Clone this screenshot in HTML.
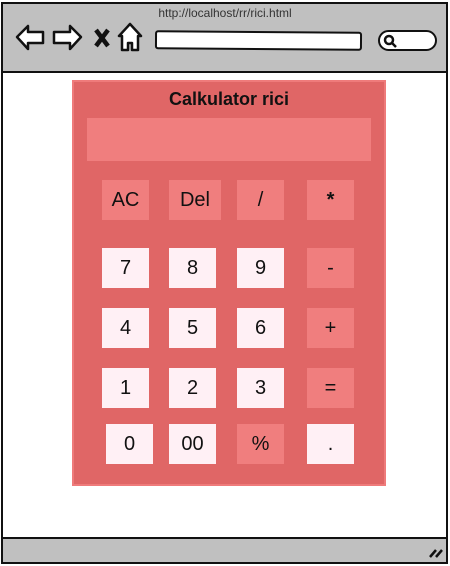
<!DOCTYPE html>
<html><head><meta charset="utf-8"><style>
*{margin:0;padding:0;box-sizing:border-box}
body{width:450px;height:566px;background:#fff;position:relative;overflow:hidden;font-family:"Liberation Sans",sans-serif}
.win{position:absolute;left:1px;top:2px;width:447px;height:562px;border:2px solid #111;border-radius:2px}
.hdr{position:absolute;left:1px;top:2px;width:447px;height:71px;background:#c0c0c0;border:2px solid #111}
.ftr{position:absolute;left:1px;top:537px;width:447px;height:27px;background:#c0c0c0;border:2px solid #111}
.url{position:absolute;left:0;width:450px;top:6px;text-align:center;font-size:12px;color:#333}
.addr{position:absolute;left:155px;top:31px;width:207px;height:19px;background:#fff;border:2.5px solid #111;border-radius:3px;transform:rotate(0.4deg)}
.srch{position:absolute;left:378px;top:30px;width:59px;height:21px;background:#fff;border:2.5px solid #111;border-radius:11px}
.panel{position:absolute;left:72px;top:80px;width:314px;height:406px;background:#e06666;border:2px solid #ef7b7b}
.title{position:absolute;left:72px;top:89px;width:314px;text-align:center;font-weight:bold;font-size:18px;color:#111}
.disp{position:absolute;left:87px;top:118px;width:284px;height:43px;background:#f07e7e}
.b{position:absolute;width:47px;height:40px;display:flex;align-items:center;justify-content:center;font-size:20px;color:#111;background:#f07e7e;padding-top:1px}
.w{background:#fff0f5}
</style></head><body>
<div class="win"></div>
<div class="hdr"></div>
<div class="url">http://localhost/rr/rici.html</div>
<svg style="position:absolute;left:14px;top:22px" width="130" height="30" viewBox="0 0 130 30">
<g fill="#fff" stroke="#111" stroke-width="2.5" stroke-linejoin="round">
<path d="M3 15 L14 4 L14 10 L29 10 L29 21 L14 21 L14 27 Z"/>
<path d="M67 15 L56 4 L56 10 L40 10 L40 21 L56 21 L56 27 Z"/>
<path d="M116 2 L105 14 L108 14 L108 28 L114 28 L114 21 L118 21 L118 28 L124 28 L124 14 L127 14 Z"/>
</g>
<path d="M82 8 L94 24 M94 8 L82 24" stroke="#111" stroke-width="4.5"/>
</svg>
<div class="addr"></div>
<div class="srch"></div>
<svg style="position:absolute;left:383px;top:34px" width="16" height="16"><circle cx="6" cy="6" r="4" fill="none" stroke="#111" stroke-width="2.5"/><path d="M9 9 L13 13" stroke="#111" stroke-width="2.5"/></svg>
<div class="ftr"></div>
<svg style="position:absolute;left:428px;top:545px" width="16" height="14"><path d="M2 12 L8 5 M8 12 L14 5" stroke="#111" stroke-width="2.5"/></svg>
<div class="panel"></div>
<div class="title">Calkulator rici</div>
<div class="disp"></div>
<div class="b" style="left:102px;top:180px">AC</div>
<div class="b" style="left:169px;top:180px;width:52px">Del</div>
<div class="b" style="left:237px;top:180px">/</div>
<div class="b" style="left:307px;top:180px;font-weight:bold">*</div>
<div class="b w" style="left:102px;top:248px">7</div>
<div class="b w" style="left:169px;top:248px">8</div>
<div class="b w" style="left:237px;top:248px">9</div>
<div class="b" style="left:307px;top:248px">-</div>
<div class="b w" style="left:102px;top:308px">4</div>
<div class="b w" style="left:169px;top:308px">5</div>
<div class="b w" style="left:237px;top:308px">6</div>
<div class="b" style="left:307px;top:308px">+</div>
<div class="b w" style="left:102px;top:368px">1</div>
<div class="b w" style="left:169px;top:368px">2</div>
<div class="b w" style="left:237px;top:368px">3</div>
<div class="b" style="left:307px;top:368px">=</div>
<div class="b w" style="left:106px;top:424px">0</div>
<div class="b w" style="left:169px;top:424px">00</div>
<div class="b" style="left:237px;top:424px">%</div>
<div class="b w" style="left:307px;top:424px">.</div>
</body></html>
